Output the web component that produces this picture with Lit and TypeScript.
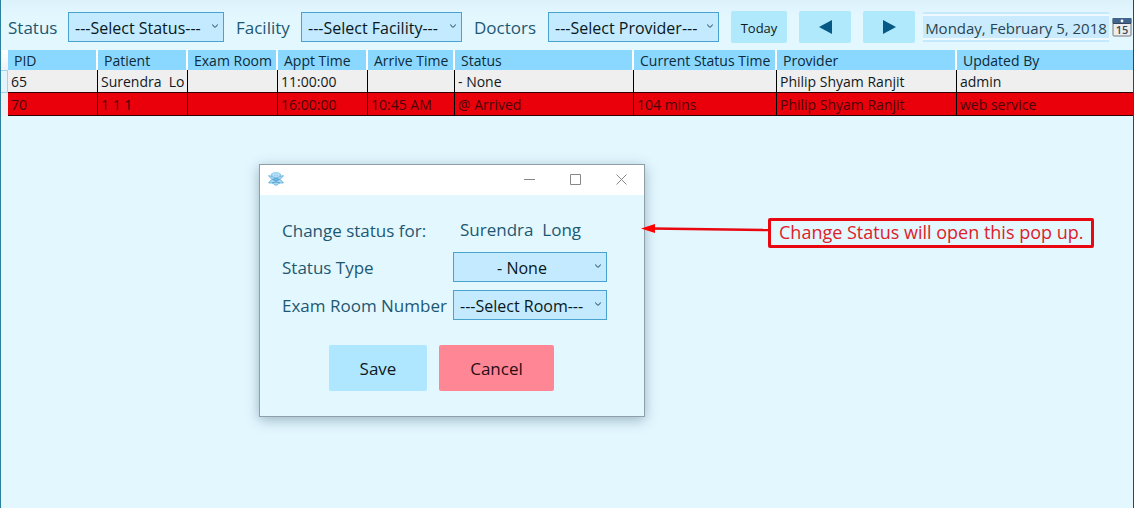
import { LitElement, html, css } from "lit";
import { customElement, property } from "lit/decorators.js";

interface Appointment {
  alert: boolean;
  cells: string[];
}

const COLUMNS = [
  "PID", "Patient", "Exam Room", "Appt Time", "Arrive Time",
  "Status", "Current Status Time", "Provider", "Updated By",
];

const APPOINTMENTS: Appointment[] = [
  { alert: false, cells: ["65", "Surendra  Lo", "", "11:00:00", "", "- None", "", "Philip Shyam Ranjit", "admin"] },
  { alert: true, cells: ["70", "1 1 1", "", "16:00:00", "10:45 AM", "@ Arrived", "104 mins", "Philip Shyam Ranjit", "web service"] },
];

const controls = css`
  * { box-sizing: border-box; }
  button, input, select { font-family: inherit; margin: 0; }
  label, .value { color: #1d5872; font-size: 17px; line-height: 24px; white-space: pre; }
  label { padding-top: 2px; }
  .pick { display: grid; height: 30px; }
  .pick select, .pick svg { grid-area: 1 / 1; }
  .pick select {
    appearance: none;
    width: 100%;
    height: 30px;
    padding: 1px 6px 0;
    border: 1px solid #4aa3cf;
    border-radius: 0;
    background: #c4eaff;
    color: #081820;
    font-size: 16px;
  }
  .pick svg { justify-self: end; align-self: center; margin: 0 5px 3px 0; pointer-events: none; }
`;

const chevron = html`<svg width="8" height="6" viewBox="0 0 8 6" aria-hidden="true">
  <path d="M1.3 1.5Q3 3.8 4 4.2Q5 3.8 6.7 1.5" fill="none" stroke="#3f6c80" stroke-width="1.1" />
</svg>`;

@customElement("status-dialog")
class StatusDialog extends LitElement {
  @property() patient = "";

  static styles = [controls, css`
    :host { display: block; border: 1px solid #8f9fa7; background: #e3f7ff; box-shadow: 0 3px 12px rgba(20, 60, 80, 0.35); }
    .bar { display: flex; align-items: flex-start; height: 30px; padding-left: 8px; background: #fff; }
    .logo { margin: 6px auto 0 0; }
    .bar button { display: grid; place-items: center; width: 46px; height: 28px; padding: 0; border: 0; background: none; }
    .form { display: grid; grid-template-columns: 164px 154px; column-gap: 7px; row-gap: 8px; align-items: center; padding: 20px 22px 0; }
    .value { height: 29px; line-height: 30px; padding-left: 7px; }
    .pick select { padding-right: 20px; }
    .pick .none { padding-right: 22px; text-align: center; text-align-last: center; }
    .actions { display: flex; gap: 12px; padding: 25px 22px 25px 69px; }
    .actions button { height: 46px; border: 0; border-radius: 2px; font-size: 17px; color: #101820; }
    .save { width: 98px; background: #aee7ff; }
    .actions .cancel { width: 115px; background: #ff8795; color: #2a0c14; }
  `];

  render() {
    return html`
      <div class="bar">
        <svg class="logo" width="16" height="16" viewBox="0 0 16 16" aria-hidden="true">
          <ellipse cx="8" cy="4.4" rx="5.3" ry="3.4" fill="#8cc8ea" />
          <path d="M4 3.2h8M3.4 5.2h9.2M6 1.4l-1 5M10 1.4l1 5M8 1v5" stroke="#d5effb" stroke-width=".6" />
          <path d="M.6 4.6Q4.4 5 8 7.6Q11.6 5 15.4 4.6Q14 7.2 11.6 8.4Q14.2 9.6 15.4 12Q12.6 11.8 11 12.2Q9.6 14.2 8 14.2Q6.4 14.2 5 12.2Q3.4 11.8.6 12Q1.8 9.6 4.4 8.4Q2 7.2.6 4.6z" fill="#a9d8f1" stroke="#6bb4df" stroke-width=".9" stroke-linejoin="round" />
          <path d="M4.4 8.4Q8 6.6 11.6 8.4Q8 11.4 4.4 8.4M4 12Q8 9.4 12 12" fill="#7bbde3" stroke="#4ba0d2" stroke-width=".8" />
        </svg>
        <button aria-label="Minimize"><svg width="11" height="11"><path d="M0 5.5h11" stroke="#888" /></svg></button>
        <button aria-label="Maximize"><svg width="11" height="11"><path d="M.5.5h10v10H.5z" fill="none" stroke="#888" /></svg></button>
        <button aria-label="Close"><svg width="11" height="11"><path d="M.5.5l10 10M10.5.5l-10 10" stroke="#888" /></svg></button>
      </div>
      <div class="form">
        <label for="who">Change status for:</label>
        <output class="value" id="who">${this.patient}</output>
        <label for="type">Status Type</label>
        <div class="pick"><select class="none" id="type"><option>- None</option></select>${chevron}</div>
        <label for="room">Exam Room Number</label>
        <div class="pick"><select id="room"><option>---Select Room---</option></select>${chevron}</div>
      </div>
      <div class="actions">
        <button class="save">Save</button>
        <button class="cancel">Cancel</button>
      </div>
    `;
  }
}

@customElement("app-root")
class AppRoot extends LitElement {
  static styles = [controls, css`
    :host {
      display: block;
      position: relative;
      min-height: 100vh;
      box-sizing: border-box;
      overflow: hidden;
      border-left: 1px solid #2b7f9f;
      border-right: 1px solid #2d4856;
      background: linear-gradient(#dcf2fb, #e3f7ff 16px);
      font-family: "Open Sans", "Noto Sans", sans-serif;
    }
    .toolbar {
      display: grid;
      grid-template-columns: 48px 156px 53px 161px 62px 171px minmax(0, 1fr);
      column-gap: 12px;
      align-items: center;
      height: 50px;
      padding: 4px 1px 0 7px;
    }
    .tools { display: flex; align-items: center; gap: 8px; }
    .nav { display: flex; gap: 12px; }
    .nav button { display: grid; place-items: center; width: 52px; height: 32px; padding: 0; border: 0; border-radius: 2px; background: #b0e8fc; color: #101820; font-size: 13px; }
    .nav .today { width: 56px; padding-top: 2px; }
    .date { flex: 1; min-width: 0; display: flex; align-items: center; gap: 3px; }
    .date input {
      flex: 1;
      min-width: 0;
      height: 30px;
      padding: 1px 0 0;
      border: solid #c4e9fc;
      border-width: 2px 0;
      outline: 0;
      background: #c9ebfd;
      box-shadow: inset 0 2px #eefaff, inset 0 -2px #eefaff;
      color: #294552;
      font-size: 15px;
      text-align: center;
    }
    .date button { display: block; padding: 0; border: 0; background: none; height: 20px; }
    .grid { display: flex; background: linear-gradient(#fff, #eef1f3 20px); }
    .handle { flex: none; width: 7px; padding-top: 20px; }
    .handle i { display: block; height: 23px; border: 1px solid #9fd3f0; border-left: 0; background: #e3f4fc; }
    table { flex: 1; min-width: 0; width: 100%; table-layout: fixed; border-collapse: separate; border-spacing: 0; font-size: 14px; color: #10181c; }
    th, td { overflow: hidden; text-align: left; font-weight: 400; white-space: pre; }
    th { height: 20px; padding: 2px 0 0 6px; line-height: 18px; background: #8ad8ff; border-right: 2px solid #fff; color: #0e2a38; }
    td { height: 23px; padding: 2px 0 0 3px; line-height: 20px; background: #efefef; border-right: 1px solid #000; border-bottom: 1px solid #300; }
    th:last-child, td:last-child { border-right: 0; }
    .alert td { background: #e9000a; color: #480408; }
    .c90 { width: 90px; }
    .c87 { width: 87px; }
    .c179 { width: 179px; }
    .c143 { width: 143px; }
    .c180 { width: 180px; }
    status-dialog { position: absolute; left: 258px; top: 164px; width: 386px; }
    .callout { position: absolute; left: 639px; top: 218px; display: flex; align-items: flex-start; }
    .callout svg { display: block; }
    .callout p { margin: 0; padding: 0 8px 2px; border: 3px solid #e90710; border-radius: 2px; color: #e02028; font-size: 18px; line-height: 22px; white-space: nowrap; }
  `];

  private picker(id: string, label: string, text: string) {
    return html`
      <label for=${id}>${label}</label>
      <div class="pick"><select id=${id}><option>${text}</option></select>${chevron}</div>
    `;
  }

  render() {
    return html`
      <div class="toolbar">
        ${this.picker("status", "Status", "---Select Status---")}
        ${this.picker("facility", "Facility", "---Select Facility---")}
        ${this.picker("doctors", "Doctors", "---Select Provider---")}
        <div class="tools">
          <div class="nav">
            <button class="today">Today</button>
            <button aria-label="Previous day"><svg width="13" height="14"><path d="M13 0v14L0 7z" fill="#075985" /></svg></button>
            <button aria-label="Next day"><svg width="13" height="14"><path d="M0 0v14l13-7z" fill="#075985" /></svg></button>
          </div>
          <div class="date">
            <input aria-label="Date" value="Monday, February 5, 2018" />
            <button aria-label="Open calendar">
              <svg width="20" height="20" viewBox="0 0 20 20">
                <rect x="1" y="2" width="18" height="17" rx="1" fill="#eceef0" stroke="#74787c" />
                <rect x=".5" y="1" width="19" height="5" fill="#41658c" />
                <path d="M1 6.5h18" stroke="#34485c" />
                <circle cx="10" cy="4" r="1.4" fill="#fff" />
                <text x="10" y="17" text-anchor="middle" font-size="11" font-weight="600" fill="#444a50">15</text>
              </svg>
            </button>
          </div>
        </div>
      </div>
      <div class="grid">
        <div class="handle"><i></i></div>
        <table>
          <colgroup>
            <col class="c90" /><col class="c90" /><col class="c90" /><col class="c90" />
            <col class="c87" /><col class="c179" /><col class="c143" /><col class="c180" /><col />
          </colgroup>
          <thead><tr>${COLUMNS.map((name) => html`<th scope="col">${name}</th>`)}</tr></thead>
          <tbody>
            ${APPOINTMENTS.map((row) => html`<tr class=${row.alert ? "alert" : ""}>${row.cells.map((cell) => html`<td>${cell}</td>`)}</tr>`)}
          </tbody>
        </table>
      </div>
      <status-dialog patient="Surendra  Long"></status-dialog>
      <div class="callout">
        <svg width="128" height="24" viewBox="0 0 128 24" aria-hidden="true">
          <path d="M12 10.5L128 12" stroke="#e90710" stroke-width="2.5" />
          <path d="M1 10.5L15 6v9z" fill="#f00" />
        </svg>
        <p>Change Status will open this pop up.</p>
      </div>
    `;
  }
}
